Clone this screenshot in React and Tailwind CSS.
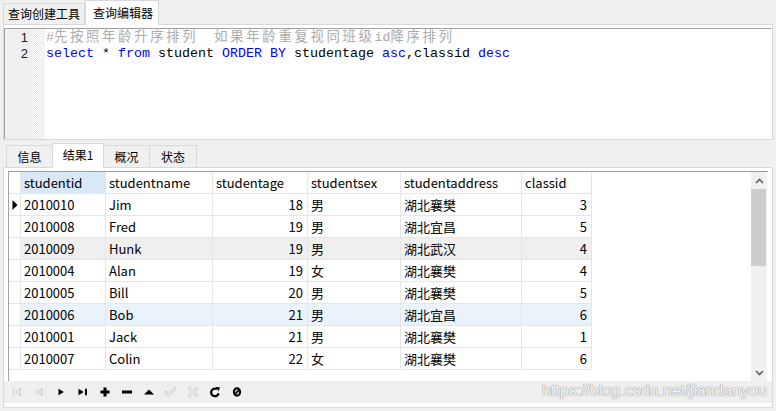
import React from "react";

const rows = [
  ["2010010", "Jim", "18", "男", "湖北襄樊", "3"],
  ["2010008", "Fred", "19", "男", "湖北宜昌", "5"],
  ["2010009", "Hunk", "19", "男", "湖北武汉", "4"],
  ["2010004", "Alan", "19", "女", "湖北襄樊", "4"],
  ["2010005", "Bill", "20", "男", "湖北襄樊", "5"],
  ["2010006", "Bob", "21", "男", "湖北宜昌", "6"],
  ["2010001", "Jack", "21", "男", "湖北襄樊", "1"],
  ["2010007", "Colin", "22", "女", "湖北襄樊", "6"],
];

const cols = [
  { name: "studentid", w: "w-[85px]", right: false },
  { name: "studentname", w: "w-[107px]", right: false },
  { name: "studentage", w: "w-[95px]", right: true },
  { name: "studentsex", w: "w-[93px]", right: false },
  { name: "studentaddress", w: "w-[121px]", right: false },
  { name: "classid", w: "w-[70px]", right: true },
];

function Tool({ children }) {
  return (
    <div className="flex h-full w-[22px] items-center justify-center">
      <svg width="14" height="14" viewBox="0 0 14 14">
        {children}
      </svg>
    </div>
  );
}

const G = "#c4c4c4";

export default function App() {
  return (
    <div className="relative flex h-[411px] w-[776px] flex-col overflow-hidden bg-[#f0f0f0] font-['Microsoft_YaHei','Noto_Sans_CJK_SC',sans-serif] text-[13px] text-black">
      {/* top tabs */}
      <div className="flex h-[24px] items-end pl-[3px]">
        <div className="h-[21px] w-[82px] border border-b-0 border-[#d9d9d9] bg-[#f0f0f0] pl-[4px] text-[12px] leading-[19px]">
          查询创建工具
        </div>
        <div className="relative z-10 -mb-px h-[25px] w-[74px] border border-b-0 border-[#d9d9d9] bg-white pl-[7px] text-[12px] leading-[23px]">
          查询编辑器
        </div>
      </div>

      {/* editor */}
      <div className="mx-[3px] flex h-[116px] flex-col border border-[#d9d9d9] bg-white pt-[3px]">
        <div className="mr-px flex flex-1 border-l border-t border-[#a0a0a0]">
          <div className="w-[28px] bg-[#efefef] pr-[5px] pt-[1px] text-right font-['Liberation_Sans',sans-serif] text-[13px] leading-[16px] text-[#222]">
            <div>1</div>
            <div>2</div>
          </div>
          <div className="w-[12px] bg-[repeating-conic-gradient(#e9e9e9_0%_25%,#ffffff_0%_50%)] bg-[length:2px_2px]" />
          <div className="flex-1 pl-[1px] pt-[1px] font-['Liberation_Mono','Noto_Sans_CJK_SC',monospace] text-[13.33px] leading-[16px] whitespace-pre">
            <div className="text-[#ababab]">
              #<span className="tracking-[2.7px]">先按照年龄升序排列</span>
              {"  "}
              <span className="tracking-[2.7px]">如果年龄重复视同班级</span>id
              <span className="tracking-[2.7px]">降序排列</span>
            </div>
            <div>
              <span className="text-[#0000ff]">select</span> * <span className="text-[#0000ff]">from</span> student{" "}
              <span className="text-[#0000ff]">ORDER BY</span> studentage <span className="text-[#0000ff]">asc</span>,classid{" "}
              <span className="text-[#0000ff]">desc</span>
            </div>
          </div>
        </div>
      </div>

      {/* result tabs */}
      <div className="flex h-[27px] items-end pl-[6px] text-[12px]">
        <div className="h-[22px] w-[47px] border border-b-0 border-[#d9d9d9] bg-[#f0f0f0] text-center leading-[21px]">
          信息
        </div>
        <div className="relative z-10 -mb-px -ml-px h-[25px] w-[52px] border border-b-0 border-[#d9d9d9] bg-white text-center leading-[22px]">
          结果1
        </div>
        <div className="-ml-px h-[22px] w-[47px] border border-b-0 border-[#d9d9d9] bg-[#f0f0f0] text-center leading-[21px]">
          概况
        </div>
        <div className="-ml-px h-[22px] w-[48px] border border-b-0 border-[#d9d9d9] bg-[#f0f0f0] text-center leading-[21px]">
          状态
        </div>
      </div>

      {/* result panel */}
      <div className="mx-[3px] flex h-[241px] flex-col border border-[#d9d9d9] bg-white pt-[3px] pb-[4px]">
        <div className="mx-[4px] flex h-[210px] border-l border-t border-[#a0a0a0]">
          <div className="flex-1 overflow-hidden">
            {/* header */}
            <div className="flex h-[22px]">
              <div className="w-[12px] border-b border-r border-[#e5e5e5]" />
              {cols.map((c, i) => (
                <div
                  key={c.name}
                  className={`${c.w} border-b border-r border-[#e5e5e5] pl-[3px] leading-[21px] ${i === 0 ? "bg-[#d9e8f6]" : ""}`}
                >
                  {c.name}
                </div>
              ))}
            </div>
            {rows.map((r, ri) => (
              <div key={ri} className="flex h-[22px]">
                <div className="flex w-[12px] items-center justify-center border-b border-r border-[#e5e5e5]">
                  {ri === 0 && (
                    <svg width="6" height="10" viewBox="0 0 6 10">
                      <path d="M0.5 0 L5.5 5 L0.5 10 Z" fill="#000" />
                    </svg>
                  )}
                </div>
                {r.map((v, ci) => (
                  <div
                    key={ci}
                    className={`${cols[ci].w} border-b border-r border-[#e5e5e5] leading-[21px] ${
                      cols[ci].right ? "pr-[4px] text-right" : "pl-[3px]"
                    } ${ri === 2 ? "bg-[#efefef]" : ri === 5 ? "bg-[#eaf3fc]" : ""}`}
                  >
                    {v}
                  </div>
                ))}
              </div>
            ))}
          </div>
          {/* scrollbar */}
          <div className="mr-px flex w-[16px] flex-col bg-[#f0f0f0]">
            <div className="flex h-[17px] items-center justify-center">
              <svg width="9" height="6" viewBox="0 0 9 6">
                <path d="M1 5 L4.5 1.5 L8 5" fill="none" stroke="#606060" strokeWidth="1.6" />
              </svg>
            </div>
            <div className="h-[77px] w-[15px] bg-[#cdcdcd]" />
            <div className="flex-1" />
            <div className="flex h-[17px] items-center justify-center">
              <svg width="9" height="6" viewBox="0 0 9 6">
                <path d="M1 1 L4.5 4.5 L8 1" fill="none" stroke="#606060" strokeWidth="1.6" />
              </svg>
            </div>
          </div>
        </div>

        {/* toolbar */}
        <div className="flex h-[22px] bg-[#efefef] pl-[2px]">
          <Tool>
            <path d="M3.5 3.5 V10.5" stroke={G} strokeWidth="1" fill="none" />
            <path d="M10.5 3.5 L5.5 7 L10.5 10.5 Z" stroke={G} strokeWidth="1" fill="none" />
          </Tool>
          <Tool>
            <path d="M10 3.5 L4.5 7 L10 10.5 Z" stroke={G} strokeWidth="1" fill="none" />
          </Tool>
          <Tool>
            <path d="M4.5 3.8 L9.8 7 L4.5 10.2 Z" fill="#000" />
          </Tool>
          <Tool>
            <path d="M2.5 3.8 L7.8 7 L2.5 10.2 Z" fill="#000" />
            <rect x="9" y="3.8" width="2" height="6.4" fill="#000" />
          </Tool>
          <Tool>
            <rect x="2.5" y="5.5" width="9" height="3" fill="#000" />
            <rect x="5.5" y="2.5" width="3" height="9" fill="#000" />
          </Tool>
          <Tool>
            <rect x="2" y="5.5" width="10" height="3" fill="#000" />
          </Tool>
          <Tool>
            <path d="M2 9.5 L7 4.5 L12 9.5 Z" fill="#000" />
          </Tool>
          <Tool>
            <path
              d="M0.5 7.5 L2 6 L4.5 8.5 L11 2 L12.5 3.5 L4.5 11.5 Z"
              stroke={G}
              strokeWidth="1"
              fill="none"
            />
          </Tool>
          <Tool>
            <path
              d="M2 3.5 L3.5 2 L7 5.5 L10.5 2 L12 3.5 L8.5 7 L12 10.5 L10.5 12 L7 8.5 L3.5 12 L2 10.5 L5.5 7 Z"
              stroke={G}
              strokeWidth="1"
              fill="none"
            />
          </Tool>
          <Tool>
            <path d="M10.6 8.2 A3.8 3.8 0 1 1 9 4.2" stroke="#000" strokeWidth="2.2" fill="none" />
            <path d="M7.6 2 L11.8 2.2 L10.8 6.2 Z" fill="#000" />
          </Tool>
          <Tool>
            <ellipse cx="7" cy="7" rx="3.1" ry="3.7" stroke="#000" strokeWidth="2.1" fill="none" />
            <path d="M4.8 9.6 L9.2 4.4" stroke="#000" strokeWidth="1.8" />
          </Tool>
        </div>
      </div>

      {/* watermark */}
      <div className="absolute right-[9px] top-[382px] font-['Liberation_Sans',sans-serif] text-[16px] leading-[18px] text-[#f8f8f8] [text-shadow:0_0_1px_#8a8a8a,0_0_1px_#8a8a8a]">
        https://blog.csdn.net/jiandanyou
      </div>
    </div>
  );
}
